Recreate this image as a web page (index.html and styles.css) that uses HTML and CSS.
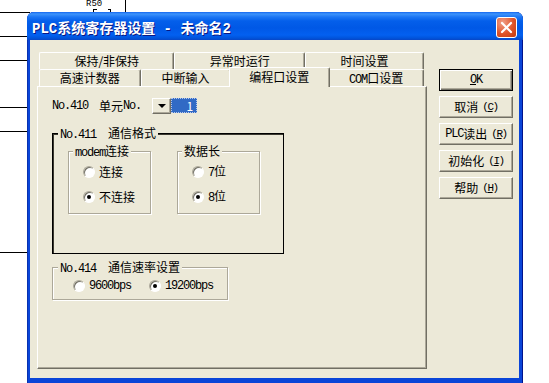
FILE: index.html
```html
<!DOCTYPE html>
<html lang="zh-CN">
<head>
    <meta charset="UTF-8">
    <meta name="viewport" content="width=device-width, initial-scale=1.0">
    <title>PLC系统寄存器设置</title>
    <link rel="stylesheet" href="styles.css">
</head>
<body>

<div class="desk">
    <!-- ladder diagram behind the dialog -->
    <svg class="ladder" width="549" height="383" viewBox="0 0 549 383">
        <g stroke="#000" stroke-width="1" fill="none" shape-rendering="crispEdges">
            <line x1="0" y1="12.5" x2="30" y2="12.5"/>
            <line x1="0" y1="36.5" x2="30" y2="36.5"/>
            <line x1="0" y1="60.5" x2="30" y2="60.5"/>
            <line x1="0" y1="107.5" x2="30" y2="107.5"/>
            <line x1="0" y1="131.5" x2="30" y2="131.5"/>
            <line x1="0" y1="252.5" x2="30" y2="252.5"/>
            <line x1="125.5" y1="0" x2="125.5" y2="13"/>
            <path d="M93.5 13V9.5h3M107.5 9.5h3V13"/>
        </g>
        <text x="86" y="6" font-family="Liberation Mono" font-size="9">R50</text>
    </svg>

    <div class="window">
        <div class="titlebar">
            <span class="title">PLC系统寄存器设置 - 未命名2</span>
            <span class="close">
                <svg width="19" height="19" viewBox="0 0 19 19">
                    <path d="M5 5L14 14M14 5L5 14" stroke="#fff" stroke-width="2.2" stroke-linecap="round"/>
                </svg>
            </span>
        </div>

        <div class="client">
            <div class="tabs">
                <div class="tabrow">
                    <div class="tab">保持/非保持</div>
                    <div class="tab">异常时运行</div>
                    <div class="tab">时间设置</div>
                </div>
                <div class="tabrow">
                    <div class="tab">高速计数器</div>
                    <div class="tab">中断输入</div>
                    <div class="tab on">编程口设置</div>
                    <div class="tab"><span class="en">COM</span>口设置</div>
                </div>

                <div class="page">
                    <div class="unit">
                        <span class="en gap">No.410</span>单元<span class="en">No.</span>
                        <div class="combo">
                            <span class="drop"><i></i></span>
                            <span class="val">1</span>
                        </div>
                    </div>

                    <fieldset class="grp black">
                        <legend><span class="en gap2">No.411</span>通信格式</legend>
                        <div class="pair">
                            <fieldset class="grp etched small">
                                <legend><span class="en">modem</span>连接</legend>
                                <div class="opt"><span class="radio"></span><span>连接</span></div>
                                <div class="opt"><span class="radio on"></span><span>不连接</span></div>
                            </fieldset>
                            <fieldset class="grp etched small">
                                <legend>数据长</legend>
                                <div class="opt"><span class="radio"></span><span><span class="en">7</span>位</span></div>
                                <div class="opt"><span class="radio on"></span><span><span class="en">8</span>位</span></div>
                            </fieldset>
                        </div>
                    </fieldset>

                    <fieldset class="grp etched baud">
                        <legend><span class="en gap2">No.414</span>通信速率设置</legend>
                        <div class="line">
                            <div class="opt"><span class="radio"></span><span class="en">9600bps</span></div>
                            <div class="opt"><span class="radio on"></span><span class="en">19200bps</span></div>
                        </div>
                    </fieldset>
                </div>
            </div>

            <div class="side">
                <button class="btn def"><span class="en"><u>O</u>K</span></button>
                <button class="btn">取消<span class="key">(<u>C</u>)</span></button>
                <button class="btn"><span class="en">PLC</span>读出<span class="key">(<u>R</u>)</span></button>
                <button class="btn">初始化<span class="key">(<u>I</u>)</span></button>
                <button class="btn">帮助<span class="key">(<u>H</u>)</span></button>
            </div>
        </div>
    </div>
</div>

</body>
</html>
```

FILE: styles.css
```css
body {
    margin: 0;
    background: #fff;
    font-family: "Noto Sans CJK SC", sans-serif;
    font-size: 12px;
    color: #000;
}
.desk {
    position: relative;
    width: 549px;
    height: 383px;
    overflow: hidden;
}
.ladder {
    position: absolute;
    left: 0;
    top: 0;
}

/* window frame */
.window {
    position: absolute;
    left: 27px;
    top: 12px;
    width: 496px;
    height: 371px;
    display: flex;
    flex-direction: column;
    background: #0a45d8;
    box-shadow: inset -1px 0 0 #00138c, inset 1px 0 0 #0831b0;
    border-radius: 7px 7px 0 0;
    overflow: hidden;
}
.titlebar {
    height: 28px;
    box-sizing: border-box;
    padding: 2px 6px 0 5px;
    display: flex;
    align-items: center;
    background: linear-gradient(#1467f0, #3d93fb 2px, #1c76f4 5px, #045fea 9px, #0058e6 16px, #0360f0 23px, #0054dc 26px, #0846c6);
}
.title {
    color: #fff;
    font: bold 14px "Liberation Mono", "Noto Sans CJK SC", monospace;
    text-shadow: 1px 1px 0 #0a1883;
    white-space: pre;
}
.close {
    margin-left: auto;
    width: 21px;
    height: 21px;
    box-sizing: border-box;
    border: 1px solid #fff;
    border-radius: 3px;
    background: radial-gradient(circle at 30% 25%, #f0a088, #e0542a 55%, #c03a0e);
    display: flex;
    align-items: center;
    justify-content: center;
}
.client {
    flex: 1;
    margin: 0 4px 5px 3px;
    padding: 12px 0 0 7px;
    background: #ece9d8;
    display: flex;
}

/* latin runs in the half-width font */
.en {
    font-family: "Liberation Mono", monospace;
    font-size: 12px;
    letter-spacing: -1.2px;
}
.gap {
    margin-right: 11px;
}
.gap2 {
    margin-right: 12px;
}
.key {
    font-family: "Liberation Mono", monospace;
    font-size: 11px;
    letter-spacing: -1.4px;
    margin-left: 4px;
}

/* tab control */
.tabs {
    width: 390px;
    display: flex;
    flex-direction: column;
}
.tabrow {
    display: flex;
    height: 17px;
    padding: 0 3px 0 2px;
}
.tab {
    flex: 1 1 auto;
    height: 17px;
    box-sizing: border-box;
    border: 1px solid;
    border-color: #fff #716f64 transparent #fff;
    border-bottom: 0;
    border-radius: 2px 2px 0 0;
    box-shadow: inset -1px 0 0 #aca899;
    text-align: center;
    line-height: 16px;
    white-space: nowrap;
}
.tab.on {
    position: relative;
    z-index: 1;
    height: 20px;
    margin: -2px -2px -1px;
    background: #ece9d8;
    line-height: 17px;
}
.page {
    height: 283px;
    box-sizing: border-box;
    border: 1px solid;
    border-color: #fff #716f64 #716f64 #fff;
    box-shadow: inset -1px -1px 0 #aca899;
    padding: 11px 0 0 14px;
}
.unit {
    display: flex;
    align-items: center;
    height: 16px;
    line-height: 14px;
}
.combo {
    display: flex;
    align-items: flex-start;
    margin-left: 11px;
}
.drop {
    width: 19px;
    height: 16px;
    box-sizing: border-box;
    border: 1px solid;
    border-color: #fff #716f64 #716f64 #fff;
    box-shadow: inset -1px -1px 0 #aca899;
    display: flex;
    align-items: center;
    justify-content: center;
}
.drop i {
    border-top: 4px solid #000;
    border-left: 4px solid transparent;
    border-right: 4px solid transparent;
}
.val {
    width: 26px;
    height: 15px;
    box-sizing: border-box;
    background: #316ac5;
    border: 1px dotted #b8c8ea;
    color: #fff;
    text-align: right;
    padding-right: 3px;
    line-height: 13px;
}

/* group boxes */
.grp {
    margin: 0;
    padding: 0;
    min-width: 0;
    box-sizing: border-box;
}
.grp legend {
    padding: 0 2px;
    margin-left: 5px;
    line-height: 14px;
    height: 14px;
    background: #ece9d8;
    white-space: nowrap;
}
.black {
    width: 232px;
    margin-top: 12px;
    border: 1px solid #000;
    box-shadow: inset 1px 1px 0 #3a3930;
    padding-bottom: 39px;
}
.etched {
    border: 1px solid #aca899;
    box-shadow: inset 1px 1px 0 #fff, 1px 1px 0 #fff;
}
.pair {
    display: flex;
    gap: 26px;
    margin-top: 4px;
    padding-left: 15px;
}
.small {
    width: 83px;
    padding: 6px 0 8px 14px;
}
.small legend {
    margin-left: -10px;
}
.opt {
    display: flex;
    align-items: center;
    gap: 4px;
    height: 16px;
    line-height: 14px;
    white-space: nowrap;
}
.small .opt + .opt {
    margin-top: 9px;
}
.baud {
    width: 176px;
    margin-top: 6px;
    padding: 4px 0 5px 20px;
}
.baud legend {
    margin-left: -15px;
}
.line {
    display: flex;
    gap: 18px;
}
.radio {
    position: relative;
    flex: none;
    width: 12px;
    height: 12px;
    box-sizing: border-box;
    border-radius: 50%;
    background: #fff;
    border: 1px solid;
    border-color: #aca899 #fff #fff #aca899;
    box-shadow: inset 1px 1px 0 #716f64;
}
.radio.on::after {
    content: "";
    position: absolute;
    left: 3px;
    top: 3px;
    width: 4px;
    height: 4px;
    border-radius: 50%;
    background: #000;
}

/* buttons on the right */
.side {
    display: flex;
    flex-direction: column;
    gap: 5px;
    margin: 17px 0 0 12px;
}
.btn {
    width: 74px;
    height: 22px;
    padding: 0;
    box-sizing: border-box;
    background: #ece9d8;
    border: 1px solid;
    border-color: #fff #716f64 #716f64 #fff;
    box-shadow: inset -1px -1px 0 #aca899;
    font-family: "Noto Sans CJK SC", sans-serif;
    font-size: 12px;
    line-height: 14px;
    color: #000;
    display: flex;
    align-items: center;
    justify-content: center;
}
.btn.def {
    border-color: #000;
    box-shadow: inset 1px 1px 0 #fff, inset -1px -1px 0 #716f64, inset -2px -2px 0 #aca899;
}
```
